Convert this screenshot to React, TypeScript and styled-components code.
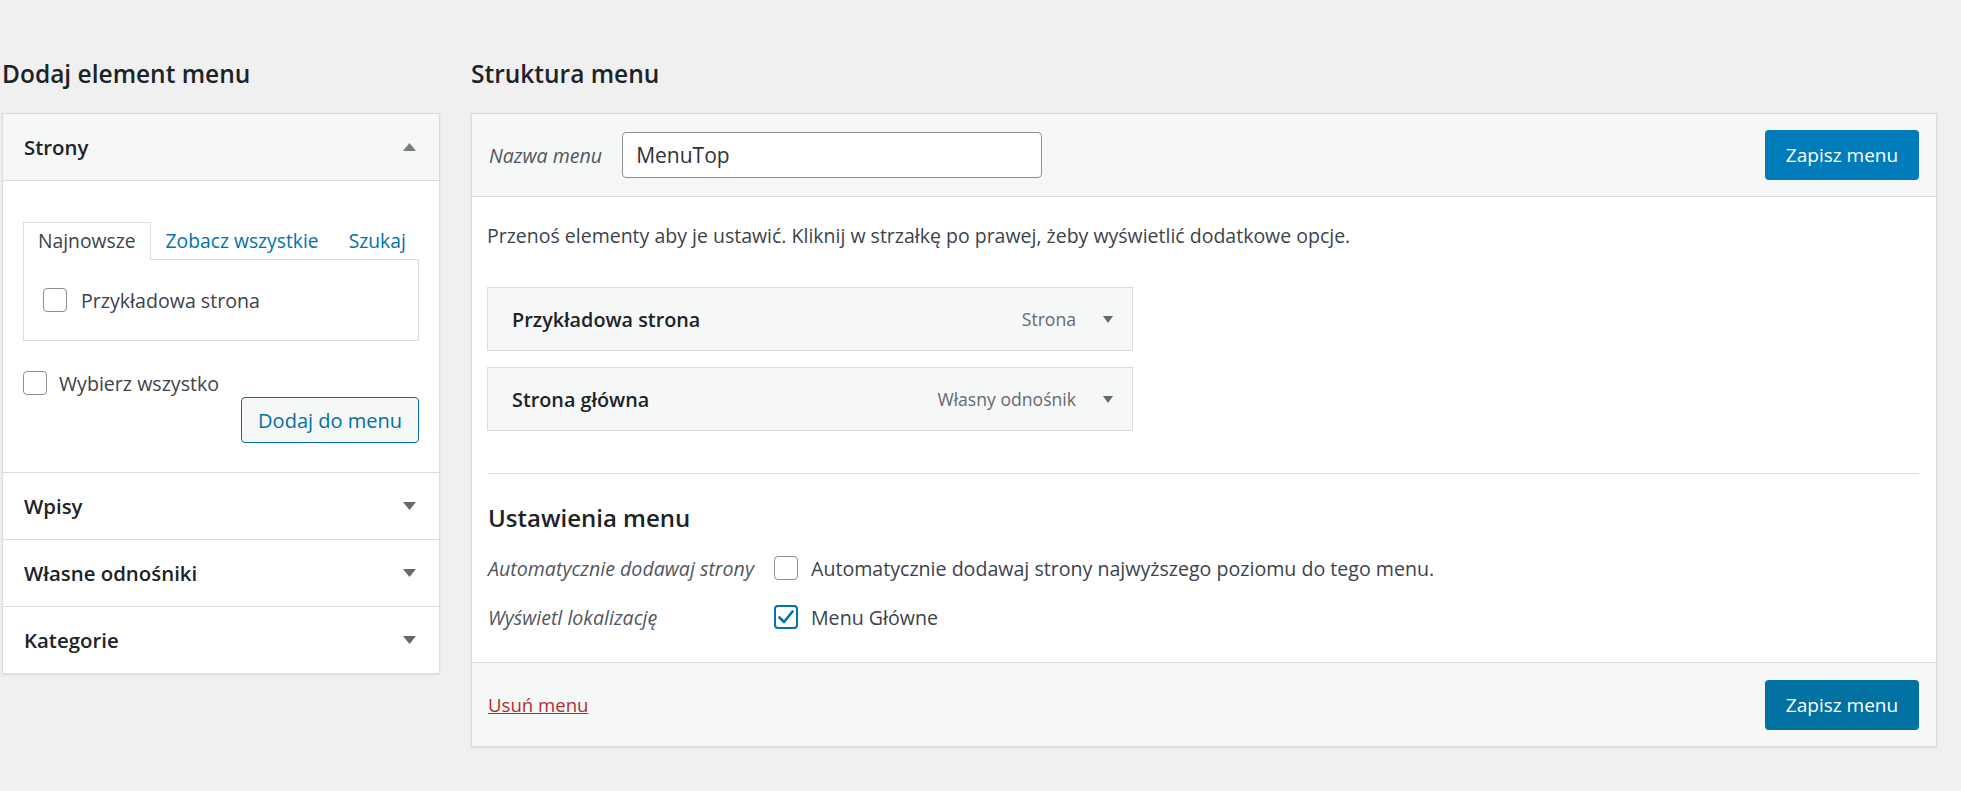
import React from "react";
import styled, { createGlobalStyle } from "styled-components";

const Global = createGlobalStyle`
  html, body { margin: 0; padding: 0; }
  body {
    background: #f0f0f1;
    font-family: "Open Sans", "Noto Sans", sans-serif;
    color: #3c434a;
    font-size: 19.6px;
  }
  * { box-sizing: border-box; }
`;

const Page = styled.div`
  display: flex;
  align-items: flex-start;
  gap: 31px;
  padding: 57px 0 0 2px;
  min-height: 791px;
`;

const Column = styled.div<{ $w: number }>`
  width: ${(p) => p.$w}px;
  display: flex;
  flex-direction: column;
  gap: 22px;
`;

const Heading = styled.h2`
  margin: 0;
  font-size: 24.5px;
  line-height: 34px;
  font-weight: 600;
  color: #1d2327;
  white-space: nowrap;
`;

const Panel = styled.div`
  background: #fff;
  border: 1px solid #dcdcde;
  box-shadow: 0 1px 2px rgba(0, 0, 0, 0.08);
`;

const AccHeader = styled.div<{ $open?: boolean; $last?: boolean }>`
  display: flex;
  align-items: center;
  justify-content: space-between;
  height: ${(p) => (p.$last ? 66 : 67)}px;
  padding: 0 23px 0 21px;
  background: ${(p) => (p.$open ? "#f6f7f7" : "#fff")};
  border-bottom: ${(p) => (p.$last ? "none" : "1px solid #dcdcde")};
  font-size: 20.4px;
  font-weight: 600;
  color: #1d2327;
`;

const AccBody = styled.div`
  padding: 41px 20px 29px 20px;
  border-bottom: 1px solid #dcdcde;
  display: flex;
  flex-direction: column;
`;

const Tabs = styled.div`
  display: flex;
  align-items: flex-end;
  height: 37px;
`;

const Tab = styled.div<{ $active?: boolean }>`
  height: 38px;
  line-height: 36px;
  padding: 0 14px;
  margin-bottom: -1px;
  position: relative;
  z-index: 1;
  font-size: 19.3px;
  color: ${(p) => (p.$active ? "#3c434a" : "#0073aa")};
  background: ${(p) => (p.$active ? "#fff" : "transparent")};
  border: 1px solid ${(p) => (p.$active ? "#dcdcde" : "transparent")};
  border-bottom: none;
  white-space: nowrap;
`;

const TabContent = styled.div`
  border: 1px solid #dcdcde;
  height: 82px;
  padding: 0 19px;
  display: flex;
  align-items: center;
`;

const CheckRow = styled.label<{ $gap: number; $h?: number }>`
  display: flex;
  align-items: center;
  gap: ${(p) => p.$gap}px;
  height: ${(p) => p.$h ?? 36}px;
  color: #3c434a;
  white-space: nowrap;
`;

const Box = styled.span<{ $checked?: boolean }>`
  width: 24px;
  height: 24px;
  flex: none;
  border-radius: 4px;
  background: #fff;
  border: ${(p) => (p.$checked ? "2px solid #0073aa" : "1px solid #8c8f94")};
  display: flex;
  align-items: center;
  justify-content: center;
`;

const SelectAll = styled.div`
  margin-top: 28px;
  display: flex;
  flex-direction: column;
`;

const SecondaryButton = styled.button`
  align-self: flex-end;
  height: 46px;
  padding: 0 16px;
  border: 1.5px solid #0071a1;
  border-radius: 4px;
  background: #f6f7f7;
  color: #0071a1;
  font-family: inherit;
  font-size: 20px;
`;

const MenuHeader = styled.div`
  display: flex;
  align-items: center;
  height: 83px;
  padding: 0 17px 0 17px;
  background: #f6f7f7;
  border-bottom: 1px solid #dcdcde;
`;

const Label = styled.span`
  font-style: italic;
  color: #50575e;
  white-space: nowrap;
`;

const NameInput = styled.div`
  margin-left: 20px;
  width: 420px;
  height: 46px;
  border: 1px solid #8c8f94;
  border-radius: 4px;
  background: #fff;
  padding: 0 13px;
  display: flex;
  align-items: center;
  font-size: 21px;
  color: #2c3338;
`;

const PrimaryButton = styled.button<{ $dark?: boolean }>`
  margin-left: auto;
  width: 154px;
  height: 50px;
  border: none;
  border-radius: 4px;
  background: ${(p) => (p.$dark ? "#0071a1" : "#007cba")};
  color: #fff;
  font-family: inherit;
  font-size: 19px;
`;

const MenuBody = styled.div`
  padding: 25px 17px 23px 15px;
  display: flex;
  flex-direction: column;
`;

const Help = styled.p`
  margin: 0;
  font-size: 19.5px;
  line-height: 27px;
  color: #3c434a;
`;

const Items = styled.div`
  margin: 38px 0 0 0;
  display: flex;
  flex-direction: column;
  gap: 16px;
`;

const Item = styled.div`
  width: 646px;
  height: 64px;
  display: flex;
  align-items: center;
  padding: 0 19px 0 24px;
  background: #f6f7f7;
  border: 1px solid #dcdcde;
`;

const ItemTitle = styled.span`
  font-weight: 600;
  font-size: 19.8px;
  color: #1d2327;
  flex: 1;
`;

const ItemType = styled.span`
  font-size: 17.6px;
  color: #646970;
  margin-right: 27px;
`;

const Divider = styled.div`
  margin: 42px 0 0 1px;
  border-top: 1px solid #dcdcde;
`;

const SubHeading = styled.h3`
  margin: 27px 0 0 1px;
  font-size: 24px;
  line-height: 34px;
  font-weight: 600;
  color: #1d2327;
`;

const Settings = styled.div`
  margin: 11px 0 0 1px;
  display: grid;
  grid-template-columns: 286px 1fr;
  grid-auto-rows: 44px;
  row-gap: 5px;
  align-items: center;
`;

const Footer = styled.div`
  display: flex;
  align-items: center;
  height: 84px;
  padding: 0 17px 0 16px;
  background: #f6f7f7;
  border-top: 1px solid #dcdcde;
`;

const DeleteLink = styled.a`
  color: #b32d2e;
  text-decoration: underline;
  font-size: 18.6px;
`;

const Arrow = ({ up, w = 13, h = 8, color = "#646970" }: { up?: boolean; w?: number; h?: number; color?: string }) => (
  <svg width={w} height={h} viewBox={`0 0 ${w} ${h}`}>
    <polygon points={up ? `0,${h} ${w},${h} ${w / 2},0` : `0,0 ${w},0 ${w / 2},${h}`} fill={color} />
  </svg>
);

const Check = () => (
  <svg width="18" height="16" viewBox="0 0 18 16">
    <path d="M2.5 8.5 L7 13 L15.5 2.5" stroke="#0073aa" strokeWidth="2.6" fill="none" strokeLinecap="round" strokeLinejoin="round" />
  </svg>
);

export default function App() {
  return (
    <>
      <Global />
      <Page>
        <Column $w={438}>
          <Heading>Dodaj element menu</Heading>
          <Panel>
            <AccHeader $open>
              <span>Strony</span>
              <Arrow up color="#787c82" />
            </AccHeader>
            <AccBody>
              <Tabs>
                <Tab $active>Najnowsze</Tab>
                <Tab>Zobacz wszystkie</Tab>
                <Tab>Szukaj</Tab>
              </Tabs>
              <TabContent>
                <CheckRow $gap={14}>
                  <Box />
                  Przykładowa strona
                </CheckRow>
              </TabContent>
              <SelectAll>
                <CheckRow $gap={12} $h={28}>
                  <Box />
                  Wybierz wszystko
                </CheckRow>
                <SecondaryButton>Dodaj do menu</SecondaryButton>
              </SelectAll>
            </AccBody>
            <AccHeader>
              <span>Wpisy</span>
              <Arrow color="#646970" />
            </AccHeader>
            <AccHeader>
              <span>Własne odnośniki</span>
              <Arrow color="#646970" />
            </AccHeader>
            <AccHeader $last>
              <span>Kategorie</span>
              <Arrow color="#646970" />
            </AccHeader>
          </Panel>
        </Column>
        <Column $w={1466}>
          <Heading>Struktura menu</Heading>
          <Panel>
            <MenuHeader>
              <Label>Nazwa menu</Label>
              <NameInput>MenuTop</NameInput>
              <PrimaryButton>Zapisz menu</PrimaryButton>
            </MenuHeader>
            <MenuBody>
              <Help>
                Przenoś elementy aby je ustawić. Kliknij w strzałkę po prawej, żeby wyświetlić dodatkowe opcje.
              </Help>
              <Items>
                <Item>
                  <ItemTitle>Przykładowa strona</ItemTitle>
                  <ItemType>Strona</ItemType>
                  <Arrow w={10} h={7} color="#646970" />
                </Item>
                <Item>
                  <ItemTitle>Strona główna</ItemTitle>
                  <ItemType>Własny odnośnik</ItemType>
                  <Arrow w={10} h={7} color="#646970" />
                </Item>
              </Items>
              <Divider />
              <SubHeading>Ustawienia menu</SubHeading>
              <Settings>
                <Label>Automatycznie dodawaj strony</Label>
                <CheckRow $gap={13}>
                  <Box />
                  Automatycznie dodawaj strony najwyższego poziomu do tego menu.
                </CheckRow>
                <Label>Wyświetl lokalizację</Label>
                <CheckRow $gap={13}>
                  <Box $checked>
                    <Check />
                  </Box>
                  Menu Główne
                </CheckRow>
              </Settings>
            </MenuBody>
            <Footer>
              <DeleteLink href="#">Usuń menu</DeleteLink>
              <PrimaryButton $dark>Zapisz menu</PrimaryButton>
            </Footer>
          </Panel>
        </Column>
      </Page>
    </>
  );
}
